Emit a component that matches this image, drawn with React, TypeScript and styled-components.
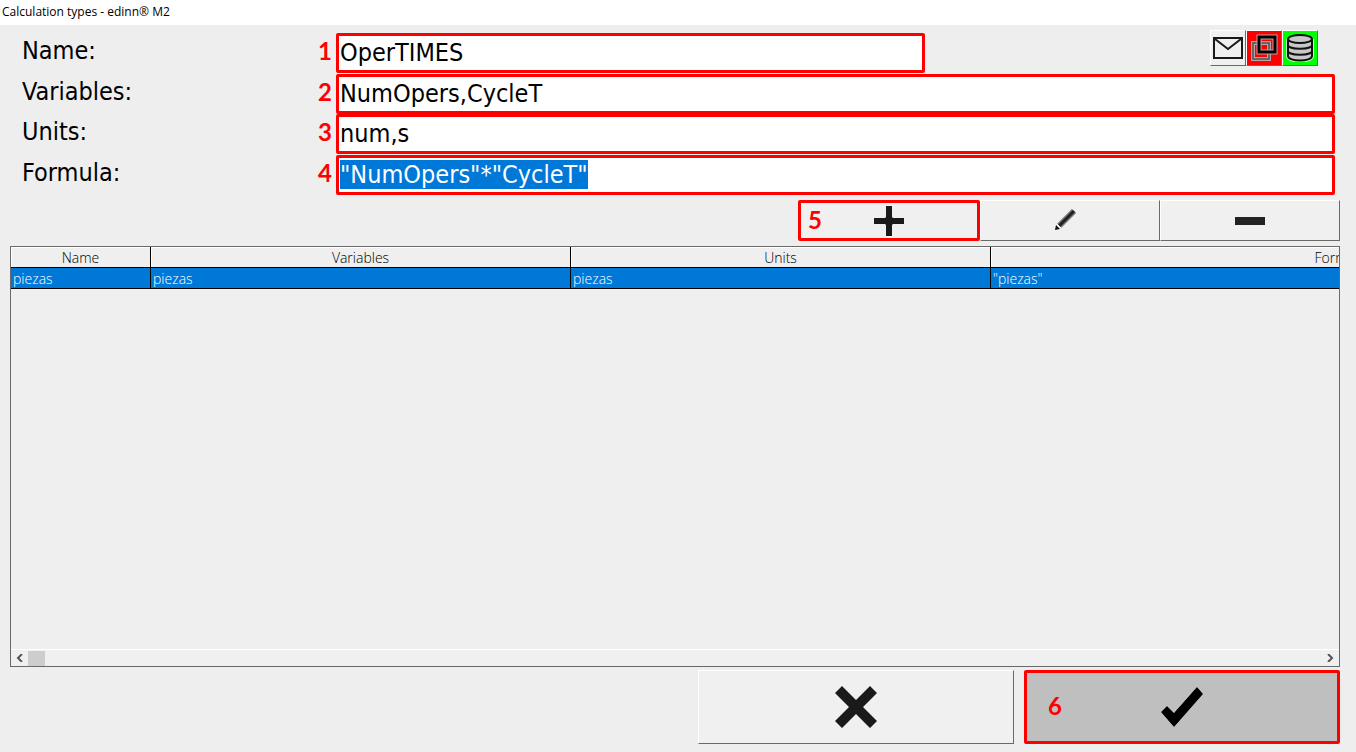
import React, { useEffect, useRef } from "react";
import styled, { createGlobalStyle, css } from "styled-components";

const RED = "#ff0000";
const UI_FONT = `"DejaVu Sans Condensed", "DejaVu Sans", sans-serif`;

const GlobalStyle = createGlobalStyle`
  * { box-sizing: border-box; }
  body { margin: 0; background: #eeeeee; color: #000; }
  button, input { font: inherit; color: inherit; }
`;

const Window = styled.div`
  min-height: 100vh;
  display: flex;
  flex-direction: column;
`;

const TitleBar = styled.header`
  height: 25px;
  padding: 0 2px;
  background: #fff;
  font: 12px/24px "Open Sans", sans-serif;
`;

const Form = styled.form`
  flex: 1;
  display: flex;
  flex-direction: column;
  padding: 5px 16px 8px 10px;
`;

const Fields = styled.div`
  display: grid;
  grid-template-rows: 43px 41px 40px 41px;
  grid-template-columns: 297px 17px 1fr;
  padding: 0 5px 0 12px;
  font: 25px/30px ${UI_FONT};
`;

const FieldLabel = styled.label`
  align-self: end;
  padding-bottom: 7px;
`;

const Marker = styled.span`
  color: ${RED};
  font: 700 24px/30px Lato, "Open Sans", sans-serif;
`;

const FieldMarker = styled(Marker)`
  align-self: end;
  justify-self: end;
  padding: 0 4px 7px 0;
`;

const LabelCell = styled.div`
  display: contents;
`;

const FieldCell = styled.div`
  display: flex;
  justify-content: space-between;
  align-items: flex-end;
`;

const TextBox = styled.input<{ $short?: boolean }>`
  width: ${(p) => (p.$short ? "59%" : "100%")};
  height: 40px;
  padding: 0 1px 1px;
  border: 3px solid ${RED};
  border-radius: 2px;
  background: #fff;
  line-height: 30px;
  outline: none;
  &::selection { background: #0078d7; color: #fff; }
`;

const StatusIcons = styled.div`
  display: flex;
  align-self: flex-start;
  margin-right: 17px;
`;

const raised = css`
  border: 1px solid;
  border-color: #fff #696969 #696969 #fff;
`;

const StatusButton = styled.button<{ $bg: string }>`
  width: 36px;
  height: 36px;
  padding: 0;
  display: grid;
  place-items: center;
  background: ${(p) => p.$bg};
  ${raised}
`;

const Toolbar = styled.div`
  display: flex;
  justify-content: flex-end;
  margin: 5px 0;
`;

const Action = styled.button<{ $marked?: boolean; $active?: boolean }>`
  position: relative;
  display: grid;
  place-items: center;
  padding: 0;
  background: ${(p) => (p.$active ? "#bfbfbf" : "#f0f0f0")};
  ${raised}
  ${(p) => p.$marked && css`border: 3px solid ${RED}; border-radius: 2px;`}
`;

const ToolButton = styled(Action)`
  width: ${(p) => (p.$marked ? 182 : 180)}px;
  height: 41px;
`;

const FooterButton = styled(Action)`
  width: 316px;
  height: 74px;
`;

const ButtonMarker = styled(Marker)<{ $left: number }>`
  position: absolute;
  left: ${(p) => p.$left}px;
  top: 50%;
  margin-top: -16px;
`;

const Grid = styled.section`
  flex: 1;
  display: flex;
  flex-direction: column;
  min-width: 0;
  border: 1px solid #696969;
  background: #efefef;
`;

const GridView = styled.div`
  flex: 1;
  width: 0;
  min-width: 100%;
  overflow: hidden;
`;

const Table = styled.table`
  width: 1680px;
  table-layout: fixed;
  border-collapse: separate;
  border-spacing: 0;
  font: 300 14px/18px "Open Sans", sans-serif;
`;

const HeadCell = styled.th<{ $width: number }>`
  width: ${(p) => p.$width}px;
  height: 21px;
  padding: 2px 0 0;
  font-weight: 300;
  border-right: 1px solid #000;
  border-bottom: 1px solid #000;
  box-shadow: inset 1px 1px #fff;
`;

const Cell = styled.td`
  height: 21px;
  padding: 2px 2px 0;
  background: #0078d7;
  color: #fff;
  border-right: 1px solid #000;
  border-bottom: 1px solid #000;
`;

const ScrollBar = styled.div`
  display: flex;
  align-items: center;
  height: 17px;
  border-top: 1px solid #fff;
  background: #f0f0f0;
`;

const ScrollArrow = styled.button`
  width: 17px;
  height: 16px;
  padding: 0;
  border: 0;
  background: none;
  display: grid;
  place-items: center;
`;

const ScrollTrack = styled.div`
  flex: 1;
`;

const ScrollThumb = styled.div`
  width: 17px;
  height: 15px;
  background: #cdcdcd;
`;

const Footer = styled.footer`
  display: flex;
  justify-content: flex-end;
  gap: 10px;
  margin-top: 3px;
`;

const MailIcon = () => (
  <svg width="30" height="22" viewBox="0 0 30 22" fill="none" stroke="#1a1a1a" strokeWidth="2">
    <path d="M1 1H29V21H1Z M2 2L15 12L28 2" />
  </svg>
);

const LayersIcon = () => (
  <svg width="28" height="28" viewBox="0 0 28 28" fill="none">
    <path d="M3 9H19V25H3Z" stroke="#b9a3a3" strokeWidth="4" />
    <path d="M3 9H19V25H3Z" stroke="#666" strokeWidth="2" />
    <path d="M9 3H25V18H9Z" stroke="#b9a3a3" strokeWidth="5" />
    <path d="M9 3H25V18H9Z" stroke="#000" strokeWidth="3" />
  </svg>
);

const DatabaseIcon = () => (
  <svg width="28" height="28" viewBox="0 0 28 28" fill="#c8c8c8" stroke="#111" strokeWidth="2">
    <path d="M2 5V22C2 28 26 28 26 22V5" stroke="#b8ffb8" strokeWidth="4" />
    <path d="M2 5V22C2 28 26 28 26 22V5" />
    <path d="M2 11C2 16 26 16 26 11M2 17C2 22 26 22 26 17" fill="none" />
    <ellipse cx="14" cy="5" rx="12" ry="4" />
  </svg>
);

const PlusIcon = () => (
  <svg width="30" height="30" viewBox="0 0 30 30" fill="#1a1a1a">
    <path d="M12 0H18V11L19 12H30V18H19L18 19V30H12V19L11 18H0V12H11L12 11Z" />
  </svg>
);

const PencilIcon = () => (
  <svg width="30" height="24" viewBox="0 0 30 24" fill="none">
    <path d="M4 17L19 2" stroke="#777" strokeWidth="6" />
    <path d="M4 17L19 2" stroke="#222" strokeWidth="3" />
    <path d="M0 21L1 16L5 20Z" fill="#111" />
    <path d="M2 15L6 19" stroke="#fff" strokeWidth="1" />
  </svg>
);

const MinusIcon = () => (
  <svg width="30" height="8" viewBox="0 0 30 8" fill="#222">
    <path d="M0 0H30V8H0Z" />
  </svg>
);

const CrossIcon = () => (
  <svg width="42" height="42" viewBox="0 0 42 42" fill="#1a1a1a">
    <path d="M7 0L21 14L35 0L42 7L28 21L42 35L35 42L21 28L7 42L0 35L14 21L0 7Z" />
  </svg>
);

const CheckIcon = () => (
  <svg width="44" height="42" viewBox="0 0 44 42" fill="#000">
    <path d="M1 26L7 20L14 27L37 1L43 8L14 41Z" stroke="#e4e4e4" strokeWidth="1" />
    <path d="M1 26L7 20L14 27L37 1L43 8L14 41Z" />
  </svg>
);

const ArrowIcon = ({ d }: { d: string }) => (
  <svg width="7" height="8" viewBox="0 0 7 8" fill="none" stroke="#555" strokeWidth="2">
    <path d={d} />
  </svg>
);

const fields = [
  { id: "name", label: "Name:", value: "OperTIMES" },
  { id: "variables", label: "Variables:", value: "NumOpers,CycleT" },
  { id: "units", label: "Units:", value: "num,s" },
  { id: "formula", label: "Formula:", value: '"NumOpers"*"CycleT"' },
];

const columns = [
  { title: "Name", width: 140, value: "piezas" },
  { title: "Variables", width: 420, value: "piezas" },
  { title: "Units", width: 420, value: "piezas" },
  { title: "Formula", width: 700, value: '"piezas"' },
];

export default function App() {
  const formula = useRef<HTMLInputElement>(null);

  useEffect(() => {
    formula.current?.focus();
    formula.current?.select();
  }, []);

  return (
    <Window>
      <GlobalStyle />
      <TitleBar>Calculation types - edinn® M2</TitleBar>
      <Form onSubmit={(e) => e.preventDefault()}>
        <Fields>
          {fields.map((f, i) => (
            <LabelCell key={f.id}>
              <FieldLabel htmlFor={f.id}>{f.label}</FieldLabel>
              <FieldMarker>{i + 1}</FieldMarker>
              <FieldCell>
                <TextBox
                  id={f.id}
                  ref={f.id === "formula" ? formula : undefined}
                  defaultValue={f.value}
                  spellCheck={false}
                  $short={i === 0}
                />
                {i === 0 && (
                  <StatusIcons>
                    <StatusButton type="button" aria-label="Messages" $bg="#f0f0f0"><MailIcon /></StatusButton>
                    <StatusButton type="button" aria-label="Windows" $bg="#ff0000"><LayersIcon /></StatusButton>
                    <StatusButton type="button" aria-label="Database" $bg="#00ff00"><DatabaseIcon /></StatusButton>
                  </StatusIcons>
                )}
              </FieldCell>
            </LabelCell>
          ))}
        </Fields>
        <Toolbar>
          <ToolButton type="button" aria-label="Add" $marked>
            <ButtonMarker $left={7}>5</ButtonMarker>
            <PlusIcon />
          </ToolButton>
          <ToolButton type="button" aria-label="Edit"><PencilIcon /></ToolButton>
          <ToolButton type="button" aria-label="Remove"><MinusIcon /></ToolButton>
        </Toolbar>
        <Grid>
          <GridView>
            <Table>
              <thead>
                <tr>
                  {columns.map((c) => (
                    <HeadCell key={c.title} $width={c.width}>{c.title}</HeadCell>
                  ))}
                </tr>
              </thead>
              <tbody>
                <tr>
                  {columns.map((c) => (
                    <Cell key={c.title}>{c.value}</Cell>
                  ))}
                </tr>
              </tbody>
            </Table>
          </GridView>
          <ScrollBar>
            <ScrollArrow type="button" aria-label="Scroll left"><ArrowIcon d="M6 0L2 4L6 8" /></ScrollArrow>
            <ScrollTrack><ScrollThumb /></ScrollTrack>
            <ScrollArrow type="button" aria-label="Scroll right"><ArrowIcon d="M1 0L5 4L1 8" /></ScrollArrow>
          </ScrollBar>
        </Grid>
        <Footer>
          <FooterButton type="button" aria-label="Cancel"><CrossIcon /></FooterButton>
          <FooterButton type="submit" aria-label="Accept" $marked $active>
            <ButtonMarker $left={21}>6</ButtonMarker>
            <CheckIcon />
          </FooterButton>
        </Footer>
      </Form>
    </Window>
  );
}
